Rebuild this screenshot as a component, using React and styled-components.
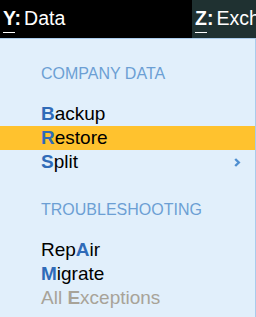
import React from "react";
import styled, { createGlobalStyle } from "styled-components";

const GlobalStyle = createGlobalStyle`
  html, body {
    margin: 0;
    padding: 0;
    background: #000;
    font-family: "Liberation Sans", Arial, sans-serif;
  }
`;

const sections = [
  {
    title: "COMPANY DATA",
    items: [
      { label: "Backup", key: 0 },
      { label: "Restore", key: 0, active: true },
      { label: "Split", key: 0, sub: true },
    ],
  },
  {
    title: "TROUBLESHOOTING",
    items: [
      { label: "RepAir", key: 3 },
      { label: "Migrate", key: 0 },
      { label: "All Exceptions", key: 4, disabled: true },
    ],
  },
];

export default function App() {
  return (
    <Screen>
      <GlobalStyle />
      <TopBar>
        <Tab>
          <Hot>Y:</Hot>Data
        </Tab>
        <Tab $alt>
          <Hot>Z:</Hot>Exchange
        </Tab>
      </TopBar>
      <Panel>
        {sections.map((s) => (
          <Section key={s.title}>
            <Heading>{s.title}</Heading>
            <List>
              {s.items.map((it) => (
                <Item key={it.label} $active={it.active} $disabled={it.disabled}>
                  <span>
                    {it.label.slice(0, it.key)}
                    <Key $disabled={it.disabled}>{it.label[it.key]}</Key>
                    {it.label.slice(it.key + 1)}
                  </span>
                  {it.sub && (
                    <Chevron viewBox="0 0 7 9" width="7" height="9">
                      <path d="M1.2 1 L4.8 4.5 L1.2 8" fill="none" stroke="#4f8fd0" strokeWidth="2.4" />
                    </Chevron>
                  )}
                </Item>
              ))}
            </List>
          </Section>
        ))}
      </Panel>
    </Screen>
  );
}

const Screen = styled.div`
  width: 256px;
  height: 317px;
  overflow: hidden;
  display: flex;
  flex-direction: column;
`;

const TopBar = styled.div`
  height: 38px;
  display: grid;
  grid-template-columns: 192px 1fr;
  background: #000;
`;

const Tab = styled.div`
  background: ${(p) => (p.$alt ? "#1f3131" : "#000")};
  color: #fff;
  font-size: 19.5px;
  line-height: 22px;
  padding: 7px 0 0 3px;
  white-space: nowrap;
  overflow: hidden;
`;

const Hot = styled.b`
  font-weight: bold;
  margin-right: 3px;
  background: linear-gradient(#fff, #fff) 0 100% / 12px 1px no-repeat;
  padding-bottom: 4px;
`;

const Panel = styled.div`
  flex: 1;
  background: #e1effb;
  border-top: 1px solid #a9cbeb;
  border-right: 1px solid #a9cbeb;
  padding-top: 26px;
`;

const Section = styled.div`
  & + & {
    margin-top: 27px;
  }
`;

const Heading = styled.div`
  color: #6c9fd4;
  font-size: 16px;
  line-height: 18px;
  padding-left: 41px;
`;

const List = styled.div`
  margin-top: 19px;
`;

const Item = styled.div`
  height: 24px;
  display: flex;
  align-items: center;
  justify-content: space-between;
  padding: 0 14px 0 41px;
  font-size: 19px;
  color: ${(p) => (p.$disabled ? "#a8a398" : "#000")};
  background: ${(p) => (p.$active ? "#ffc22e" : "transparent")};
`;

const Key = styled.b`
  color: ${(p) => (p.$disabled ? "#a8a398" : "#2f6bb8")};
`;

const Chevron = styled.svg`
  display: block;
`;
